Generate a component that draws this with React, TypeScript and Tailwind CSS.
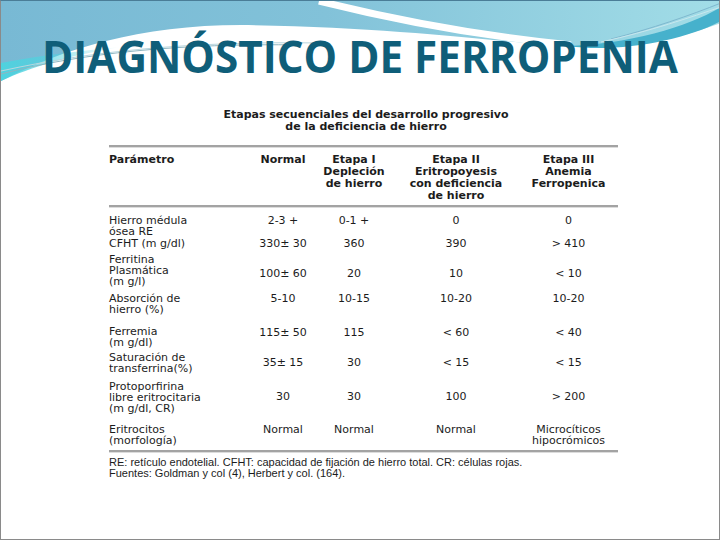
const body = "font-['DejaVu_Sans',sans-serif]";

type Row = { p: string[]; v: string[][]; mt: string; pt: string };

const rows: Row[] = [
  { p: ["Hierro médula", "ósea RE"], v: [["2-3 +"], ["0-1 +"], ["0"], ["0"]], mt: "mt-[7px]", pt: "pt-0" },
  { p: ["CFHT (m g/dl)"], v: [["330± 30"], ["360"], ["390"], ["> 410"]], mt: "mt-[1px]", pt: "pt-0" },
  { p: ["Ferritina", "Plasmática", "(m g/l)"], v: [["100± 60"], ["20"], ["10"], ["< 10"]], mt: "mt-[5px]", pt: "pt-[14px]" },
  { p: ["Absorción de", "hierro (%)"], v: [["5-10"], ["10-15"], ["10-20"], ["10-20"]], mt: "mt-[6px]", pt: "pt-0" },
  { p: ["Ferremia", "(m g/dl)"], v: [["115± 50"], ["115"], ["< 60"], ["< 40"]], mt: "mt-[11px]", pt: "pt-[1px]" },
  { p: ["Saturación de", "transferrina(%)"], v: [["35± 15"], ["30"], ["< 15"], ["< 15"]], mt: "mt-[4px]", pt: "pt-[5px]" },
  { p: ["Protoporfirina", "libre eritrocitaria", "(m g/dl, CR)"], v: [["30"], ["30"], ["100"], ["> 200"]], mt: "mt-[7px]", pt: "pt-[10px]" },
  { p: ["Eritrocitos", "(morfología)"], v: [["Normal"], ["Normal"], ["Normal"], ["Microcíticos", "hipocrómicos"]], mt: "mt-[10px]", pt: "pt-0" },
];

const cols = "grid grid-cols-[142px_64px_78px_126px_99px]";

function DoubleLine({ className = "" }: { className?: string }) {
  return <div className={`h-[3px] border-t-2 border-[#a3a3a3] bg-[#dcdcdc] ${className}`} />;
}

function Swoosh() {
  return (
    <svg className="absolute left-0 top-0" width="720" height="100" viewBox="0 0 720 100">
      <defs>
        <linearGradient id="sky" x1="0" y1="0" x2="1" y2="0">
          <stop offset="0" stopColor="#78b9d4" />
          <stop offset="0.45" stopColor="#82c2d9" />
          <stop offset="1" stopColor="#a2dde7" />
        </linearGradient>
        <linearGradient id="cyan" x1="0" y1="0" x2="1" y2="0">
          <stop offset="0" stopColor="#4fd2df" />
          <stop offset="1" stopColor="#4fd2df" stopOpacity="0" />
        </linearGradient>
      </defs>
      <path d="M0,0 H720 V22 C680,36 640,46 600,46 C520,46 420,26 240,24 C140,24 60,48 0,80 Z" fill="url(#sky)" />
      <path d="M0,62 C40,54 80,50 120,46 C70,54 30,66 0,80 Z" fill="url(#cyan)" />
      <path d="M318,0 C390,18 470,34 570,44" stroke="#ffffff" strokeWidth="7" fill="none" />
      <path d="M560,45 C630,44 690,24 720,6 V20 C690,36 640,48 590,47 Z" fill="#46b1cc" />
      <path d="M0,73 C80,52 180,42 300,44" stroke="#8fb6c2" strokeWidth="1" fill="none" />
      <path d="M0,70 C90,50 190,40 320,42" stroke="#b9d6de" strokeWidth="1" fill="none" />
      <path d="M610,38 C650,28 690,14 720,2" stroke="#7fb8cf" strokeWidth="1" fill="none" />
      <path d="M600,41 C650,30 690,16 720,6" stroke="#c8e7ee" strokeWidth="1" fill="none" />
    </svg>
  );
}

export default function App() {
  return (
    <div className="relative w-[720px] h-[540px] overflow-hidden bg-white border border-[#8a8a8a] border-t-[#4a7d97] text-[#1c1c1c]">
      <Swoosh />
      <div className="relative pt-[28px] pl-[41px]">
        <h1 className="inline-block origin-left scale-x-[0.96] whitespace-nowrap font-['Open_Sans',sans-serif] font-bold text-[44px] leading-[54px] text-[#0f5e79]">
          DIAGNÓSTICO DE FERROPENIA
        </h1>
      </div>
      <div className={`relative ml-[108px] w-[509px] mt-[26px] ${body} text-[11px]`}>
        <div className="text-center font-bold leading-[12px] ml-[5px]">
          <div>Etapas secuenciales del desarrollo progresivo</div>
          <div>de la deficiencia de hierro</div>
        </div>
        <DoubleLine className="mt-[12px]" />
        <div className={`${cols} mt-[6px] font-bold leading-[12px]`}>
          <div>Parámetro</div>
          <div className="text-center">Normal</div>
          <div className="text-center">Etapa I<br />Depleción<br />de hierro</div>
          <div className="text-center">Etapa II<br />Eritropoyesis<br />con deficiencia<br />de hierro</div>
          <div className="text-center">Etapa III<br />Anemia<br />Ferropenica</div>
        </div>
        <DoubleLine className="mt-[3px]" />
        {rows.map((r, i) => (
          <div key={i} className={`${cols} ${r.mt} leading-[11px]`}>
            <div>{r.p.map((t, j) => <div key={j}>{t}</div>)}</div>
            {r.v.map((c, j) => (
              <div key={j} className={`text-center ${r.pt}`}>
                {c.map((t, k) => <div key={k}>{t}</div>)}
              </div>
            ))}
          </div>
        ))}
        <DoubleLine className="mt-[4px]" />
        <div className="mt-[4px] font-['Liberation_Sans',sans-serif] text-[11px] leading-[11px]">
          <div>RE: retículo endotelial. CFHT: capacidad de fijación de hierro total. CR: células rojas.</div>
          <div>Fuentes: Goldman y col (4), Herbert y col. (164).</div>
        </div>
      </div>
    </div>
  );
}
